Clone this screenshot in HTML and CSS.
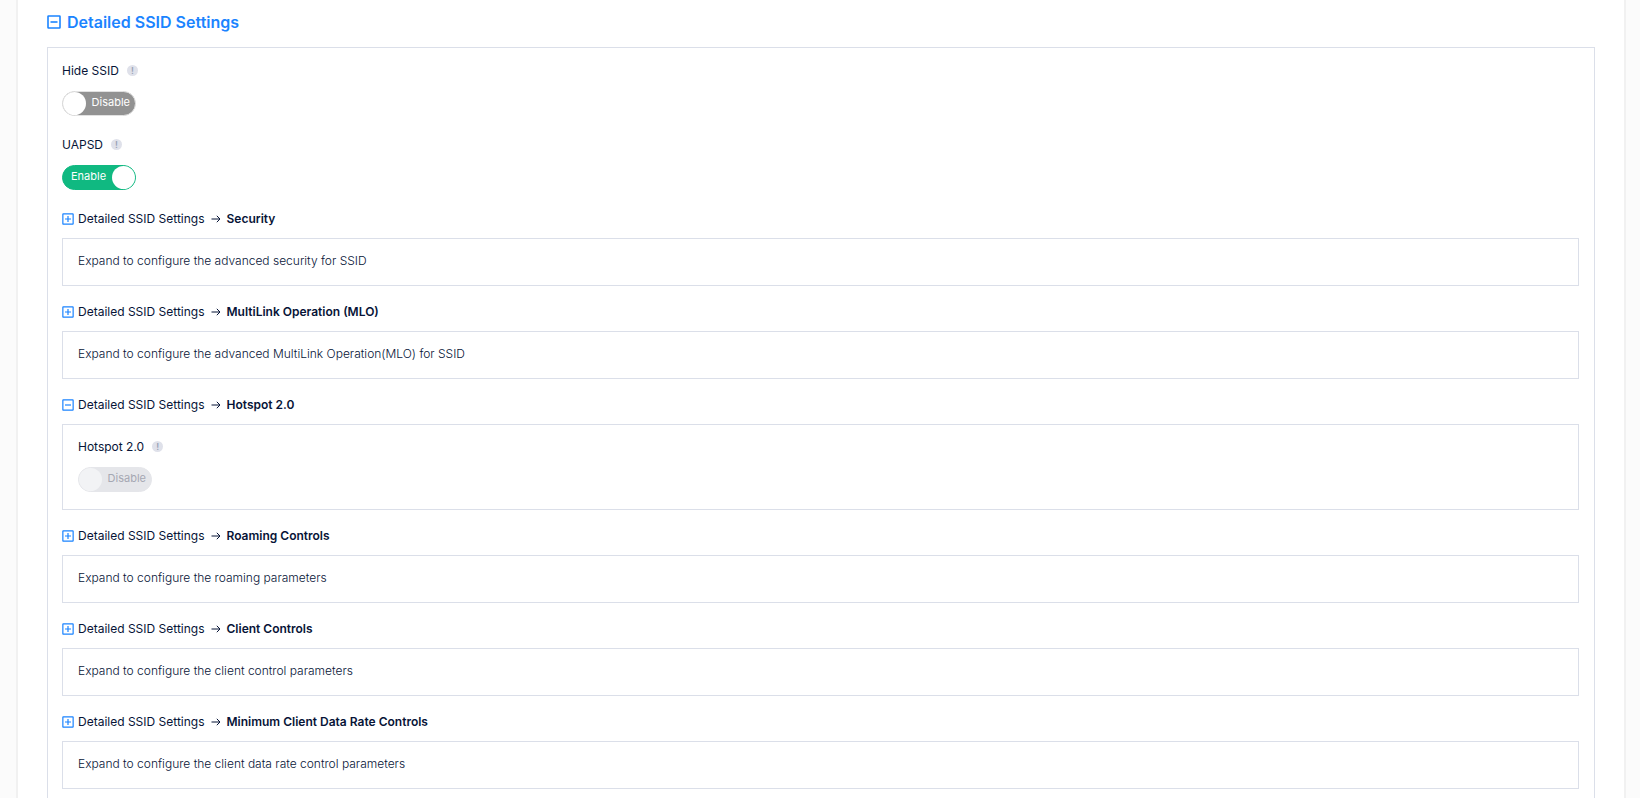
FILE: index.html
```html
<!DOCTYPE html>
<html lang="en">
<head>
    <meta charset="UTF-8">
    <meta name="viewport" content="width=device-width, initial-scale=1.0">
    <title>Detailed SSID Settings</title>
    <link rel="stylesheet" href="styles.css">
</head>
<body>
    <!-- Shared icons -->
    <svg class="sprite" aria-hidden="true">
        <symbol id="icon-minus" viewBox="0 0 14 14">
            <rect x="1" y="1" width="12" height="12" rx="0.5" />
            <path d="M3.5 7h7" />
        </symbol>
        <symbol id="icon-plus" viewBox="0 0 14 14">
            <rect x="1" y="1" width="12" height="12" rx="0.5" />
            <path d="M3.5 7h7M7 3.5v7" />
        </symbol>
        <symbol id="icon-arrow" viewBox="0 0 10 10">
            <path d="M0.5 5h8.5M5.8 1.8L9 5L5.8 8.2" />
        </symbol>
    </svg>

    <main class="card">
        <h2 class="card-title">
            <button type="button" class="toggle-title" aria-expanded="true">
                <svg class="icon-box"><use href="#icon-minus" /></svg>
                Detailed SSID Settings
            </button>
        </h2>

        <div class="panel">
            <div class="field">
                <div class="field-label">
                    <label for="hide-ssid">Hide SSID</label>
                    <span class="info">!</span>
                </div>
                <label class="switch">
                    <input type="checkbox" id="hide-ssid">
                    <span class="switch-text">Disable</span>
                </label>
            </div>

            <div class="field">
                <div class="field-label">
                    <label for="uapsd">UAPSD</label>
                    <span class="info">!</span>
                </div>
                <label class="switch">
                    <input type="checkbox" id="uapsd" checked>
                    <span class="switch-text">Enable</span>
                </label>
            </div>

            <section class="group">
                <button type="button" class="group-title" aria-expanded="false">
                    <svg class="icon-box"><use href="#icon-plus" /></svg>
                    <span>Detailed SSID Settings</span>
                    <svg class="icon-arrow"><use href="#icon-arrow" /></svg>
                    <strong>Security</strong>
                </button>
                <div class="group-body">
                    <p>Expand to configure the advanced security for SSID</p>
                </div>
            </section>

            <section class="group">
                <button type="button" class="group-title" aria-expanded="false">
                    <svg class="icon-box"><use href="#icon-plus" /></svg>
                    <span>Detailed SSID Settings</span>
                    <svg class="icon-arrow"><use href="#icon-arrow" /></svg>
                    <strong>MultiLink Operation (MLO)</strong>
                </button>
                <div class="group-body">
                    <p>Expand to configure the advanced MultiLink Operation(MLO) for SSID</p>
                </div>
            </section>

            <section class="group">
                <button type="button" class="group-title" aria-expanded="true">
                    <svg class="icon-box"><use href="#icon-minus" /></svg>
                    <span>Detailed SSID Settings</span>
                    <svg class="icon-arrow"><use href="#icon-arrow" /></svg>
                    <strong>Hotspot 2.0</strong>
                </button>
                <div class="group-body">
                    <div class="field">
                        <div class="field-label">
                            <label for="hotspot">Hotspot 2.0</label>
                            <span class="info">!</span>
                        </div>
                        <label class="switch">
                            <input type="checkbox" id="hotspot" disabled>
                            <span class="switch-text">Disable</span>
                        </label>
                    </div>
                </div>
            </section>

            <section class="group">
                <button type="button" class="group-title" aria-expanded="false">
                    <svg class="icon-box"><use href="#icon-plus" /></svg>
                    <span>Detailed SSID Settings</span>
                    <svg class="icon-arrow"><use href="#icon-arrow" /></svg>
                    <strong>Roaming Controls</strong>
                </button>
                <div class="group-body">
                    <p>Expand to configure the roaming parameters</p>
                </div>
            </section>

            <section class="group">
                <button type="button" class="group-title" aria-expanded="false">
                    <svg class="icon-box"><use href="#icon-plus" /></svg>
                    <span>Detailed SSID Settings</span>
                    <svg class="icon-arrow"><use href="#icon-arrow" /></svg>
                    <strong>Client Controls</strong>
                </button>
                <div class="group-body">
                    <p>Expand to configure the client control parameters</p>
                </div>
            </section>

            <section class="group">
                <button type="button" class="group-title" aria-expanded="false">
                    <svg class="icon-box"><use href="#icon-plus" /></svg>
                    <span>Detailed SSID Settings</span>
                    <svg class="icon-arrow"><use href="#icon-arrow" /></svg>
                    <strong>Minimum Client Data Rate Controls</strong>
                </button>
                <div class="group-body">
                    <p>Expand to configure the client data rate control parameters</p>
                </div>
            </section>
        </div>
    </main>
</body>
</html>
```

FILE: styles.css
```css
:root {
    --blue: #1b84ff;
    --green: #10b981;
    --gray: #929292;
    --text: #071437;
    --line: #dbdfe9;
}

* {
    box-sizing: border-box;
    margin: 0;
    padding: 0;
}

html {
    scrollbar-width: none;
}

body {
    background: #fbfbfb;
    color: var(--text);
    font-family: Inter, "Liberation Sans", sans-serif;
    font-size: 12px;
    line-height: 16px;
}

button {
    border: none;
    background: none;
    color: inherit;
    font: inherit;
    cursor: pointer;
}

.sprite {
    position: absolute;
    width: 0;
    height: 0;
}

.card {
    margin: 0 14px 0 16px;
    padding: 12px 29px 0;
    background: #fff;
    border: solid #f1f1f1;
    border-width: 0 2px;
}

.card-title {
    margin-bottom: 15px;
    font-size: 16px;
    line-height: 20px;
}

.toggle-title {
    display: flex;
    align-items: center;
    gap: 6px;
    color: var(--blue);
    font-weight: 600;
}

.icon-box {
    width: 14px;
    height: 14px;
    fill: none;
    stroke: var(--blue);
    stroke-width: 1.6;
}

.panel {
    padding: 15px 15px 14px 14px;
    border: 1px solid var(--line);
}

.field {
    margin-bottom: 21px;
}

.field-label {
    display: flex;
    align-items: center;
    gap: 8px;
    margin-bottom: 12px;
}

.info {
    width: 11px;
    height: 11px;
    margin-bottom: 2px;
    border-radius: 50%;
    background: #dfe1ea;
    color: #99a1b7;
    font-size: 9px;
    font-weight: 600;
    line-height: 11px;
    text-align: center;
}

/* Switch */
.switch {
    display: flex;
    align-items: center;
    justify-content: space-between;
    width: 74px;
    height: 25px;
    padding-right: 5px;
    border: 1px solid #e1e1e1;
    border-radius: 13px;
    background: var(--gray);
    color: #fff;
    font-size: 11px;
    cursor: pointer;
}

.switch input {
    appearance: none;
    width: 23px;
    height: 23px;
    border-radius: 50%;
    background: #fff;
    cursor: inherit;
}

.switch-text {
    padding-bottom: 4px;
}

.switch:has(input:checked) {
    flex-direction: row-reverse;
    padding: 0 0 0 8px;
    border-color: var(--green);
    background: var(--green);
}

.switch:has(input:disabled) {
    border-color: #e5e6ea;
    background: #e5e6ea;
    color: #a5a8b3;
    cursor: default;
}

.switch input:disabled {
    background: #f2f3f5;
}

/* Nested groups */
.group {
    margin-bottom: 18px;
}

.group-title {
    display: flex;
    align-items: center;
    margin-bottom: 11px;
}

.group-title .icon-box {
    width: 12px;
    height: 12px;
    margin-right: 4px;
    stroke-width: 1.4;
}

.icon-arrow {
    width: 10px;
    height: 10px;
    margin: 0 6px;
    fill: none;
    stroke: var(--text);
    stroke-width: 1;
}

.group-title strong {
    font-weight: 600;
}

.group-body {
    padding: 14px 15px 16px;
    border: 1px solid var(--line);
}

.group-body p {
    font-weight: 300;
}

.group-body .field {
    margin-bottom: 1px;
}
```
